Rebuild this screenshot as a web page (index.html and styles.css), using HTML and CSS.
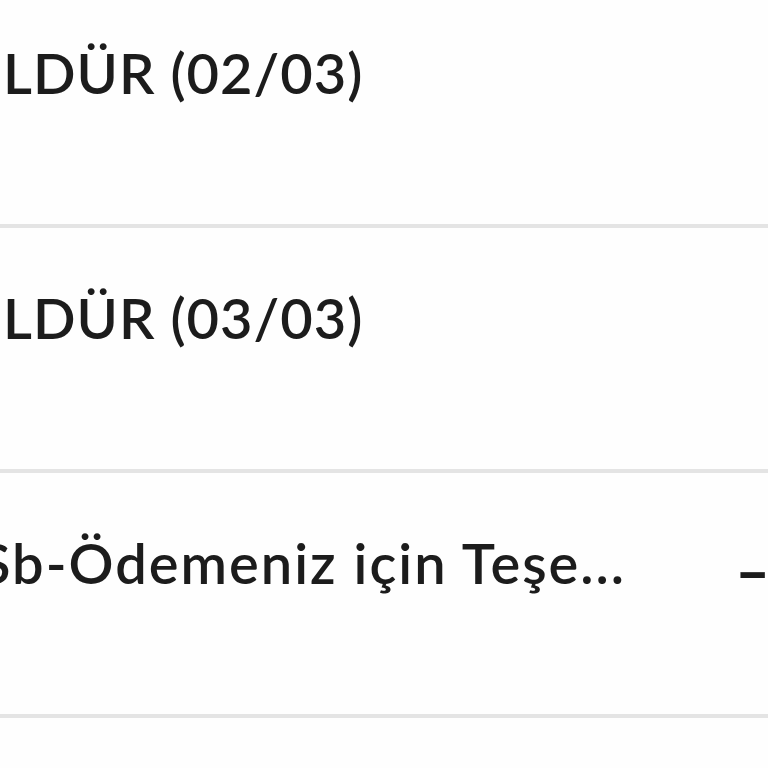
FILE: index.html
```html
<!DOCTYPE html>
<html lang="tr">
<head>
    <meta charset="UTF-8">
    <meta name="viewport" content="width=device-width, initial-scale=1.0">
    <title>Hesap Hareketleri</title>
    <link rel="stylesheet" href="styles.css">
</head>
<body>
    <div class="list">
        <div class="row">
            <span class="title first">LDÜR (02/03)</span>
        </div>
        <div class="row">
            <span class="title first">LDÜR (03/03)</span>
        </div>
        <div class="row">
            <span class="title cut">Sb-Ödemeniz için Teşe...</span>
            <span class="amount">–</span>
        </div>
        <div class="row"></div>
    </div>
</body>
</html>
```

FILE: styles.css
```css
body {
    margin: 0;
    padding: 0;
    background-color: #fefefe;
    font-family: 'Lato', 'Noto Sans', sans-serif;
    color: #1c1c1c;
    overflow: hidden;
    width: 768px;
    height: 768px;
}

.list {
    margin-top: -17px;
}

.row {
    display: flex;
    justify-content: space-between;
    align-items: flex-start;
    height: 245px;
    border-bottom: 4px solid #e4e4e4;
    padding-top: 54px;
    box-sizing: border-box;
    overflow: hidden;
}

.row:last-child {
    border-bottom: none;
}

.title {
    font-size: 56px;
    line-height: 72px;
    font-weight: 600;
    letter-spacing: 1px;
    white-space: nowrap;
}

.first {
    margin-left: 3px;
}

.cut {
    margin-left: -20px;
    letter-spacing: 2px;
}

.amount {
    font-size: 60px;
    line-height: 72px;
    font-weight: 900;
    margin-top: 8px;
    margin-right: -2px;
}
```
